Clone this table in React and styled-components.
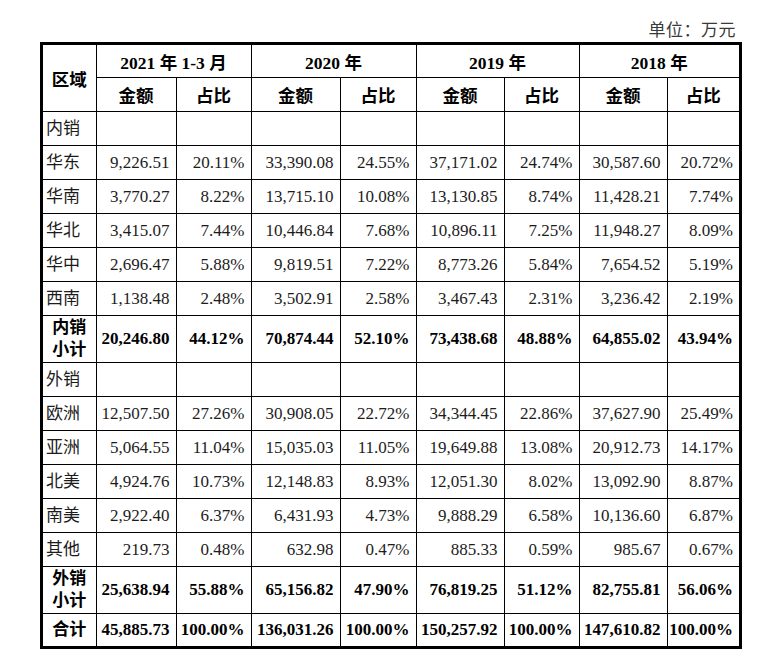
import React from 'react';
import styled, { createGlobalStyle } from 'styled-components';

const GlobalStyle = createGlobalStyle`
  html, body {
    margin: 0;
    padding: 0;
    background: #ffffff;
  }
  body {
    font-family: "Liberation Serif", "Noto Sans CJK SC", serif;
    color: #111;
  }
`;

const Page = styled.div`
  width: 766px;
  height: 658px;
  padding: 19px 0 0 40px;
  box-sizing: border-box;
`;

const Unit = styled.div`
  width: 702px;
  box-sizing: border-box;
  padding-right: 6px;
  text-align: right;
  font-size: 17px;
  line-height: 23px;
  color: #3a3a3a;
  letter-spacing: 0.5px;
`;

const Table = styled.table`
  width: 702px;
  border-collapse: collapse;
  table-layout: fixed;
  border: 3px solid #000;
  font-size: 17px;
`;

const Row = styled.tr`
  height: ${(p) => (p.$tall ? 47 : 34)}px;
`;

const Cell = styled.td`
  border: 1px solid #000;
  padding: ${(p) =>
    p.$align === 'left' ? '0 0 0 3px' : p.$align === 'center' ? '0' : '0 6px 0 0'};
  text-align: ${(p) => p.$align || 'right'};
  font-weight: ${(p) => (p.$bold ? 700 : 400)};
  line-height: ${(p) => (p.$stack ? '22px' : '20px')};
  color: ${(p) => (p.$bold ? '#000' : '#1c1c1c')};
  white-space: nowrap;
  vertical-align: middle;
`;

const HeadCell = styled.th`
  border: 1px solid #000;
  padding: 0;
  text-align: center;
  font-weight: 700;
  font-size: 17.5px;
  color: #000;
  vertical-align: middle;
`;

const widths = [54.5, 80, 75, 89, 76, 88, 75, 88, 73.5];
const periods = ['2021 年 1-3 月', '2020 年', '2019 年', '2018 年'];

const domestic = [
  ['华东', '9,226.51', '20.11%', '33,390.08', '24.55%', '37,171.02', '24.74%', '30,587.60', '20.72%'],
  ['华南', '3,770.27', '8.22%', '13,715.10', '10.08%', '13,130.85', '8.74%', '11,428.21', '7.74%'],
  ['华北', '3,415.07', '7.44%', '10,446.84', '7.68%', '10,896.11', '7.25%', '11,948.27', '8.09%'],
  ['华中', '2,696.47', '5.88%', '9,819.51', '7.22%', '8,773.26', '5.84%', '7,654.52', '5.19%'],
  ['西南', '1,138.48', '2.48%', '3,502.91', '2.58%', '3,467.43', '2.31%', '3,236.42', '2.19%'],
];

const foreign = [
  ['欧洲', '12,507.50', '27.26%', '30,908.05', '22.72%', '34,344.45', '22.86%', '37,627.90', '25.49%'],
  ['亚洲', '5,064.55', '11.04%', '15,035.03', '11.05%', '19,649.88', '13.08%', '20,912.73', '14.17%'],
  ['北美', '4,924.76', '10.73%', '12,148.83', '8.93%', '12,051.30', '8.02%', '13,092.90', '8.87%'],
  ['南美', '2,922.40', '6.37%', '6,431.93', '4.73%', '9,888.29', '6.58%', '10,136.60', '6.87%'],
  ['其他', '219.73', '0.48%', '632.98', '0.47%', '885.33', '0.59%', '985.67', '0.67%'],
];

const domesticTotal = ['内销', '20,246.80', '44.12%', '70,874.44', '52.10%', '73,438.68', '48.88%', '64,855.02', '43.94%'];
const foreignTotal = ['外销', '25,638.94', '55.88%', '65,156.82', '47.90%', '76,819.25', '51.12%', '82,755.81', '56.06%'];
const grandTotal = ['合计', '45,885.73', '100.00%', '136,031.26', '100.00%', '150,257.92', '100.00%', '147,610.82', '100.00%'];

function SectionRow({ label }) {
  return (
    <Row>
      <Cell $align="left">{label}</Cell>
      {widths.slice(1).map((_, i) => (
        <Cell key={i} />
      ))}
    </Row>
  );
}

function DataRow({ row }) {
  return (
    <Row>
      <Cell $align="left">{row[0]}</Cell>
      {row.slice(1).map((v, i) => (
        <Cell key={i}>{v}</Cell>
      ))}
    </Row>
  );
}

function TotalRow({ row, tall }) {
  return (
    <Row $tall={tall}>
      <Cell $align="center" $bold $stack={tall}>
        {tall ? (
          <>
            {row[0]}
            <br />
            小计
          </>
        ) : (
          row[0]
        )}
      </Cell>
      {row.slice(1).map((v, i) => (
        <Cell key={i} $bold>
          {v}
        </Cell>
      ))}
    </Row>
  );
}

export default function App() {
  return (
    <Page>
      <GlobalStyle />
      <Unit>单位：万元</Unit>
      <Table>
        <colgroup>
          {widths.map((w, i) => (
            <col key={i} style={{ width: w }} />
          ))}
        </colgroup>
        <thead>
          <Row>
            <HeadCell rowSpan={2}>区域</HeadCell>
            {periods.map((p) => (
              <HeadCell key={p} colSpan={2}>
                {p}
              </HeadCell>
            ))}
          </Row>
          <Row>
            {periods.map((p) => (
              <React.Fragment key={p}>
                <HeadCell>金额</HeadCell>
                <HeadCell>占比</HeadCell>
              </React.Fragment>
            ))}
          </Row>
        </thead>
        <tbody>
          <SectionRow label="内销" />
          {domestic.map((r) => (
            <DataRow key={r[0]} row={r} />
          ))}
          <TotalRow row={domesticTotal} tall />
          <SectionRow label="外销" />
          {foreign.map((r) => (
            <DataRow key={r[0]} row={r} />
          ))}
          <TotalRow row={foreignTotal} tall />
          <TotalRow row={grandTotal} />
        </tbody>
      </Table>
    </Page>
  );
}
